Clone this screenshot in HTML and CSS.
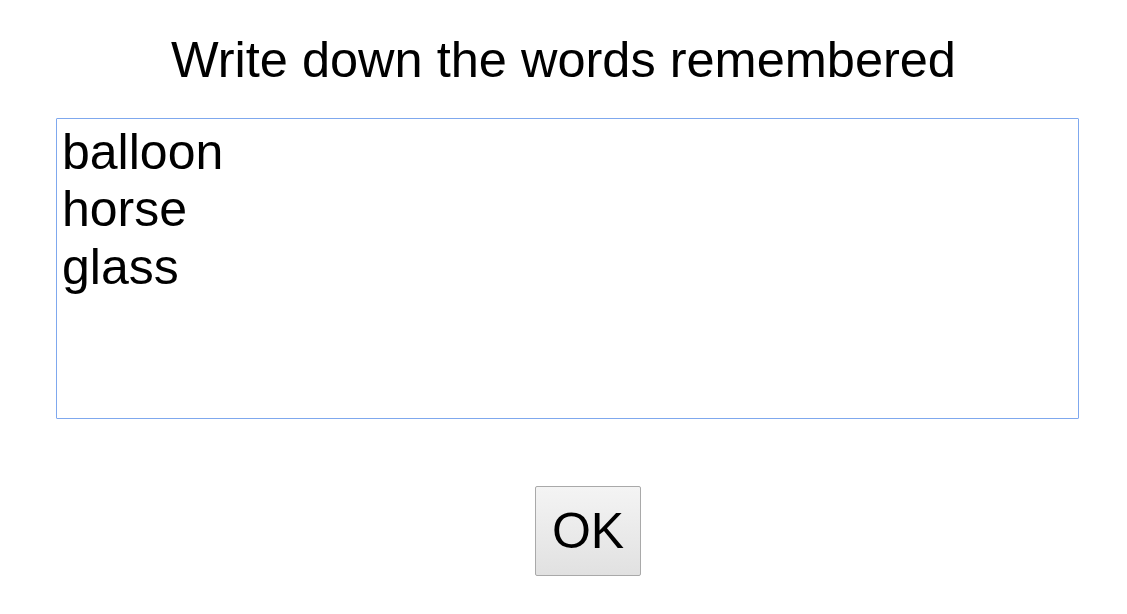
FILE: index.html
```html
<!DOCTYPE html>
<html lang="en">
<head>
<meta charset="utf-8">
<title>Recall</title>
<link rel="stylesheet" href="styles.css">
</head>
<body>
<main class="page">
  <h1 class="title">Write down the words remembered</h1>
  <textarea class="answer" spellcheck="false">balloon
horse
glass</textarea>
  <div class="actions">
    <button class="ok" type="button">OK</button>
  </div>
</main>
</body>
</html>
```
FILE: styles.css
```css
html, body {
  margin: 0;
  padding: 0;
  background: #ffffff;
}
.page {
  font-family: "Liberation Sans", Arial, sans-serif;
  color: #000;
  padding-top: 31px;
  display: flex;
  flex-direction: column;
}
.title {
  margin: 0;
  font-size: 50.5px;
  font-weight: normal;
  line-height: 57.5px;
  text-align: center;
}
.answer {
  display: block;
  box-sizing: border-box;
  margin: 29px 0 0 56px;
  width: 1023px;
  height: 301px;
  padding: 5px 4px 2px 5px;
  border: 1px solid #7fa8ee;
  border-radius: 1px;
  font-family: "Liberation Sans", Arial, sans-serif;
  font-size: 50px;
  line-height: 57.5px;
  color: #000;
  resize: none;
  outline: none;
  overflow: hidden;
}
.actions {
  display: flex;
  justify-content: flex-start;
  margin-top: 67px;
  padding-left: 535px;
}
.ok {
  box-sizing: border-box;
  width: 106px;
  height: 90px;
  padding: 3px 0 0;
  border: 1px solid #a9a9a9;
  border-radius: 2px;
  background: linear-gradient(#f4f4f4, #e1e1e1);
  font-family: "Liberation Sans", Arial, sans-serif;
  font-size: 50px;
  line-height: 57.5px;
  color: #000;
}
```
